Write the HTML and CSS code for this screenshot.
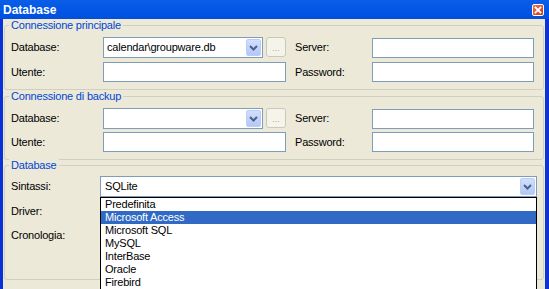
FILE: index.html
```html
<!DOCTYPE html>
<html>
<head>
<meta charset="utf-8">
<link rel="stylesheet" href="styles.css">
</head>
<body>
<div class="window">
  <div class="titlebar">
    <span class="title">Database</span>
    <span class="close">
      <svg width="12" height="12" viewBox="0 0 12 12"><path d="M3.5 3.5l5 5M8.5 3.5l-5 5" stroke="#fff" stroke-width="1.8" fill="none" stroke-linecap="square"/></svg>
    </span>
  </div>
  <div class="frame">
    <div class="client">
      <div class="group g1">
        <div class="legend">Connessione principale</div>
        <div class="grid2 gap4">
          <div class="label">Database:</div>
          <div class="combo-row">
            <div class="combo w160"><span class="value">calendar\groupware.db</span><span class="drop"><svg width="9" height="6" viewBox="0 0 9 6"><path d="M1 1l3.5 3.5L8 1" stroke="#4D6185" stroke-width="2" fill="none"/></svg></span></div>
            <div class="ellipsis">...</div>
          </div>
          <div class="label">Server:</div>
          <div class="textbox"></div>
          <div class="label">Utente:</div>
          <div class="textbox w183"></div>
          <div class="label">Password:</div>
          <div class="textbox"></div>
        </div>
      </div>
      <div class="group g2">
        <div class="legend">Connessione di backup</div>
        <div class="grid2 gap3">
          <div class="label">Database:</div>
          <div class="combo-row">
            <div class="combo w160"><span class="value"></span><span class="drop"><svg width="9" height="6" viewBox="0 0 9 6"><path d="M1 1l3.5 3.5L8 1" stroke="#4D6185" stroke-width="2" fill="none"/></svg></span></div>
            <div class="ellipsis">...</div>
          </div>
          <div class="label">Server:</div>
          <div class="textbox"></div>
          <div class="label">Utente:</div>
          <div class="textbox w183"></div>
          <div class="label">Password:</div>
          <div class="textbox"></div>
        </div>
      </div>
      <div class="group g3">
        <div class="legend">Database</div>
        <div class="grid3">
          <div class="label">Sintassi:</div>
          <div class="combo-holder">
            <div class="combo wide"><span class="value v2">SQLite</span><span class="drop"><svg width="9" height="6" viewBox="0 0 9 6"><path d="M1 1l3.5 3.5L8 1" stroke="#4D6185" stroke-width="2" fill="none"/></svg></span></div>
            <ul class="listbox">
              <li>Predefinita</li>
              <li class="selected">Microsoft Access</li>
              <li>Microsoft SQL</li>
              <li>MySQL</li>
              <li>InterBase</li>
              <li>Oracle</li>
              <li>Firebird</li>
            </ul>
          </div>
          <div class="label">Driver:</div>
          <div class="textbox wide"></div>
          <div class="label">Cronologia:</div>
          <div class="textbox wide"></div>
        </div>
      </div>
    </div>
  </div>
</div>
</body>
</html>
```
FILE: styles.css
```css
html, body {
  margin: 0;
  padding: 0;
  overflow: hidden;
  background: #ECE9D8;
}
body {
  font-family: "Liberation Sans", Arial, sans-serif;
  font-size: 11px;
  letter-spacing: -0.2px;
  color: #000;
}
.window {
  width: 549px;
  height: 289px;
  display: flex;
  flex-direction: column;
  overflow: hidden;
}
.titlebar {
  height: 19px;
  flex: none;
  display: flex;
  justify-content: space-between;
  align-items: flex-start;
  padding: 0 5px 0 3px;
  background: linear-gradient(to bottom, #0A5EE8 0%, #0358E6 40%, #0054E3 70%, #024FDB 100%);
}
.title {
  color: #fff;
  font-weight: bold;
  font-size: 12px;
  letter-spacing: 0;
  line-height: 14px;
  margin-top: 3px;
  font-family: "Liberation Sans", Arial, sans-serif;
}
.close {
  width: 12px;
  height: 12px;
  margin-top: 4px;
  box-sizing: border-box;
  border: 1px solid #fff;
  border-radius: 2px;
  background: linear-gradient(135deg, #E97654 0%, #E0512F 50%, #C63E1C 100%);
  display: flex;
  align-items: center;
  justify-content: center;
}
.close svg {
  display: block;
  margin: -1px;
}
.frame {
  flex: 1;
  min-height: 0;
  display: flex;
  border-left: 3px solid #0831D9;
  border-right: 4px solid #0A35D4;
  background: #ECE9D8;
}
.client {
  flex: 1;
  padding: 6px 1px 0 1px;
}
.group {
  border: 1px solid #D0D0BF;
  border-radius: 3px;
  padding: 0 6px 7px 6px;
}
.g2 { margin-top: 6px; }
.g3 { margin-top: 5px; padding-bottom: 34px; }
.legend {
  display: block;
  width: fit-content;
  margin: -7px 0 0 -2px;
  padding: 0 2px;
  line-height: 13px;
  height: 13px;
  color: #0046D5;
  background: #ECE9D8;
}
.grid2 {
  display: grid;
  grid-template-columns: 92px 192px 77px 162px;
  align-items: center;
  margin-top: 5px;
}
.gap4 { row-gap: 4px; }
.gap3 { row-gap: 3px; }
.grid3 {
  display: grid;
  grid-template-columns: 89px 437px;
  grid-template-rows: 21px 20px 20px;
  row-gap: 4px;
  align-items: center;
  margin-top: 4px;
}
.label {
  line-height: 13px;
  white-space: nowrap;
}
.textbox {
  height: 20px;
  box-sizing: border-box;
  border: 1px solid #7F9DB9;
  background: #fff;
  width: 162px;
}
.textbox.w183 { width: 183px; }
.textbox.wide { width: 437px; }
.combo-row {
  display: flex;
  gap: 3px;
  align-items: stretch;
}
.combo {
  height: 21px;
  box-sizing: border-box;
  border: 1px solid #7F9DB9;
  background: #fff;
  padding: 1px;
  display: flex;
  align-items: center;
}
.combo.w160 { width: 160px; }
.combo.wide { width: 437px; }
.combo .value {
  flex: 1;
  padding-left: 2px;
  line-height: 13px;
  white-space: nowrap;
  overflow: hidden;
}
.combo .value.v2 { padding-left: 3px; }
.drop {
  width: 15px;
  height: 17px;
  box-sizing: border-box;
  border: 1px solid #BACCF7;
  border-radius: 2px;
  background: linear-gradient(to bottom, #D2DEFD 0%, #C1D3FB 50%, #B4C8F6 100%);
  display: flex;
  align-items: center;
  justify-content: center;
}
.drop svg { display: block; margin-top: 1px; }
.ellipsis {
  width: 20px;
  height: 20px;
  box-sizing: border-box;
  border: 1px solid #CAC8BB;
  border-radius: 3px;
  background: #F5F4EA;
  color: #ACA899;
  font-size: 9px;
  line-height: 20px;
  text-align: center;
  letter-spacing: 0;
}
.combo-holder {
  position: relative;
}
.listbox {
  position: absolute;
  left: 0;
  top: 21px;
  width: 437px;
  box-sizing: border-box;
  margin: 0;
  padding: 0;
  list-style: none;
  border: 1px solid #000;
  background: #fff;
  z-index: 5;
}
.listbox li {
  height: 13px;
  line-height: 13px;
  padding-left: 4px;
  white-space: nowrap;
}
.listbox li.selected {
  background: #316AC5;
  color: #fff;
}
```
